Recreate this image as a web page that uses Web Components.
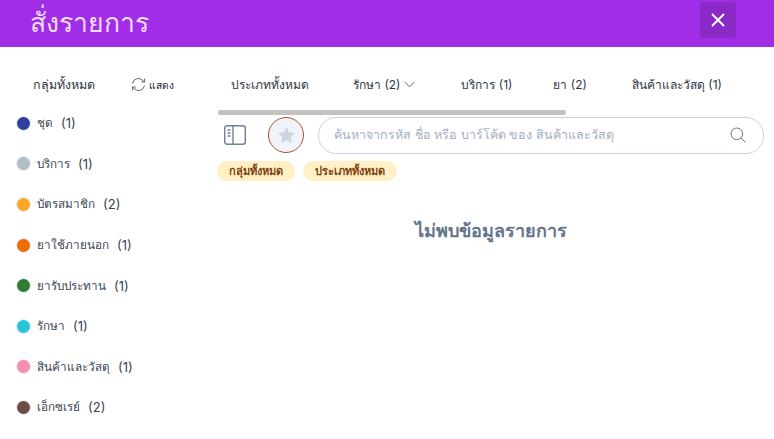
<!DOCTYPE html>
<html lang="th">
<head>
<meta charset="utf-8">
<title>สั่งรายการ</title>
<style>
    html, body { margin: 0; height: 100%; background: #fff; }
    body { font-family: Inter, Roboto, "Noto Sans", "Liberation Sans", sans-serif; overflow: hidden; }
</style>
</head>
<body>
<order-dialog></order-dialog>
<script>
class OrderHeader extends HTMLElement {
    constructor() {
        super();
        this.attachShadow({ mode: 'open' });
    }
    connectedCallback() {
        this.shadowRoot.innerHTML = `
        <style>
            :host { display: flex; align-items: flex-start; justify-content: space-between; height: 47px; background: #a22de6; padding: 2px 38px 0 30px; box-sizing: border-box; }
            h1 { margin: -2px 0 0; font-size: 26.6px; line-height: 44px; font-weight: 400; color: #f0dcfb; }
            button { width: 36px; height: 36px; border: 0; border-radius: 4px; background: #8a29c6; padding: 0; display: flex; align-items: center; justify-content: center; }
        </style>
        <h1><slot></slot></h1>
        <button aria-label="close">
            <svg width="14" height="14" viewBox="0 0 14 14" fill="none" stroke="#fff" stroke-width="2"><path d="M1 1l12 12M13 1L1 13"/></svg>
        </button>`;
    }
}

class GroupRow extends HTMLElement {
    constructor() {
        super();
        this.attachShadow({ mode: 'open' });
    }
    connectedCallback() {
        this.shadowRoot.innerHTML = `
        <style>
            :host { display: flex; align-items: center; height: 40.6px; font-size: 13px; color: #3a4352; }
            i { width: 13px; height: 13px; border-radius: 50%; background: ${this.getAttribute('color')}; margin-right: 7px; box-shadow: 0 0 0 1px #e8ebf3; }
            span { font-size: 11.7px; }
            b { font-weight: 400; margin-left: 8px; }
        </style>
        <i></i><span><slot></slot></span><b>(${this.getAttribute('count')})</b>`;
    }
}

class GroupPanel extends HTMLElement {
    constructor() {
        super();
        this.attachShadow({ mode: 'open' });
    }
    connectedCallback() {
        this.shadowRoot.innerHTML = `
        <style>
            :host { display: block; width: 218px; flex: none; padding: 0 0 0 17px; box-sizing: border-box; }
            .top { display: flex; align-items: center; height: 56px; padding: 19px 0 0 16px; box-sizing: border-box; font-size: 12.4px; color: #2e3644; }
            .show { display: flex; align-items: center; gap: 3px; margin-left: 36px; font-size: 10.2px; color: #1e2533; }
        </style>
        <div class="top">
            <span>กลุ่มทั้งหมด</span>
            <span class="show">
                <svg width="15" height="15" viewBox="0 0 15 15" fill="none" stroke="#5c6675" stroke-width="1"><path d="M1.5 6.5A6 6 0 0 1 12 3.6L13.6 5M13.6 1.6V5h-3.3M13.5 8.5A6 6 0 0 1 3 11.4L1.4 10M1.4 13.4V10h3.3"/></svg>
                แสดง
            </span>
        </div>
        <div><slot></slot></div>`;
    }
}

class TypeTabs extends HTMLElement {
    constructor() {
        super();
        this.attachShadow({ mode: 'open' });
    }
    connectedCallback() {
        this.shadowRoot.innerHTML = `
        <style>
            :host { display: block; height: 70px; margin-right: 10px; box-sizing: border-box; }
            .tabs { display: flex; align-items: center; height: 63px; padding: 11px 0 0 13px; box-sizing: border-box; font-size: 12px; color: #2e3644; white-space: nowrap; }
            .tabs span { display: inline-flex; align-items: center; gap: 4px; }
            .tabs span:nth-child(1) { margin-right: 44px; }
            .tabs span:nth-child(2) { margin-right: 46px; }
            .tabs span:nth-child(3) { margin-right: 41px; }
            .tabs span:nth-child(4) { margin-right: 45px; }
            .bar { width: 348px; height: 5px; border-radius: 3px; background: #c1c1c1; }
        </style>
        <div class="tabs">
            <span>ประเภททั้งหมด</span>
            <span>รักษา (2)
                <svg width="11" height="7" viewBox="0 0 11 7" fill="none" stroke="#5c6675"><path d="M.7 1l4.8 4.8L10.3 1"/></svg>
            </span>
            <span>บริการ (1)</span>
            <span>ยา (2)</span>
            <span>สินค้าและวัสดุ (1)</span>
        </div>
        <div class="bar"></div>`;
    }
}

class SearchBar extends HTMLElement {
    constructor() {
        super();
        this.attachShadow({ mode: 'open' });
    }
    connectedCallback() {
        this.shadowRoot.innerHTML = `
        <style>
            :host { display: flex; align-items: center; height: 36px; margin-right: 10px; }
            .panel { margin-left: 6px; display: flex; }
            .star { width: 36px; height: 36px; box-sizing: border-box; border: 1.2px solid #a9552d; border-radius: 50%; background: #f0f3f9; margin-left: 22px; display: flex; align-items: center; justify-content: center; }
            .field { flex: 1; height: 37px; margin-left: 14px; box-sizing: border-box; border: 1px solid #c6d2e0; border-radius: 18px; display: flex; align-items: center; justify-content: space-between; padding: 0 17px 0 15px; font-size: 12.5px; color: #a3aec2; }
        </style>
        <svg class="panel" width="22" height="20" viewBox="0 0 22 20" fill="none" stroke="#6f7f99" stroke-width="1.4">
            <rect x=".7" y=".7" width="20.6" height="18.6" rx="2.5"/><path d="M9 1v18M3.5 5h3M3.5 8h3M3.5 11h3"/>
        </svg>
        <div class="star">
            <svg width="17" height="16" viewBox="0 0 20 19" fill="#cdd6e2" stroke="#cdd6e2" stroke-linejoin="round" stroke-width="1.5"><path d="M10 1.5l2.6 5.4 5.9.8-4.3 4.1 1 5.9L10 14.9l-5.2 2.8 1-5.9-4.3-4.1 5.9-.8z"/></svg>
        </div>
        <div class="field">
            <span>ค้นหาจากรหัส ชื่อ หรือ บาร์โค้ด ของ สินค้าและวัสดุ</span>
            <svg width="16" height="16" viewBox="0 0 16 16" fill="none" stroke="#6b7686" stroke-width="1"><circle cx="6.8" cy="6.8" r="5.8"/><path d="M11 11l4.4 4.4"/></svg>
        </div>`;
    }
}

class FilterChip extends HTMLElement {
    constructor() {
        super();
        this.attachShadow({ mode: 'open' });
    }
    connectedCallback() {
        this.shadowRoot.innerHTML = `
        <style>
            :host { display: inline-flex; align-items: center; height: 20px; padding: 0 12px; border-radius: 10px; background: #fff0c6; color: #7f4310; font-size: 11px; font-weight: 700; }
        </style>
        <slot></slot>`;
    }
}

class OrderDialog extends HTMLElement {
    constructor() {
        super();
        this.attachShadow({ mode: 'open' });
    }
    connectedCallback() {
        this.shadowRoot.innerHTML = `
        <style>
            :host { display: block; }
            .body { display: flex; }
            .main { flex: 1; min-width: 0; }
            .chips { display: flex; gap: 8px; margin: 8px 0 0 -1px; }
            .empty { margin: 36px 0 0; text-align: center; font-size: 18px; line-height: 28px; font-weight: 700; color: #64748b; padding-right: 10px; }
        </style>
        <order-header>สั่งรายการ</order-header>
        <div class="body">
            <group-panel>
                <group-row color="#303f9f" count="1">ชุด</group-row>
                <group-row color="#b0bec5" count="1">บริการ</group-row>
                <group-row color="#f9a825" count="2">บัตรสมาชิก</group-row>
                <group-row color="#ef6c00" count="1">ยาใช้ภายนอก</group-row>
                <group-row color="#2e7d32" count="1">ยารับประทาน</group-row>
                <group-row color="#26c6da" count="1">รักษา</group-row>
                <group-row color="#f48fb1" count="1">สินค้าและวัสดุ</group-row>
                <group-row color="#6d4c41" count="2">เอ็กซเรย์</group-row>
            </group-panel>
            <div class="main">
                <type-tabs></type-tabs>
                <search-bar></search-bar>
                <div class="chips">
                    <filter-chip>กลุ่มทั้งหมด</filter-chip>
                    <filter-chip>ประเภททั้งหมด</filter-chip>
                </div>
                <p class="empty">ไม่พบข้อมูลรายการ</p>
            </div>
        </div>`;
    }
}

customElements.define('order-header', OrderHeader);
customElements.define('group-row', GroupRow);
customElements.define('group-panel', GroupPanel);
customElements.define('type-tabs', TypeTabs);
customElements.define('search-bar', SearchBar);
customElements.define('filter-chip', FilterChip);
customElements.define('order-dialog', OrderDialog);
</script>
</body>
</html>
